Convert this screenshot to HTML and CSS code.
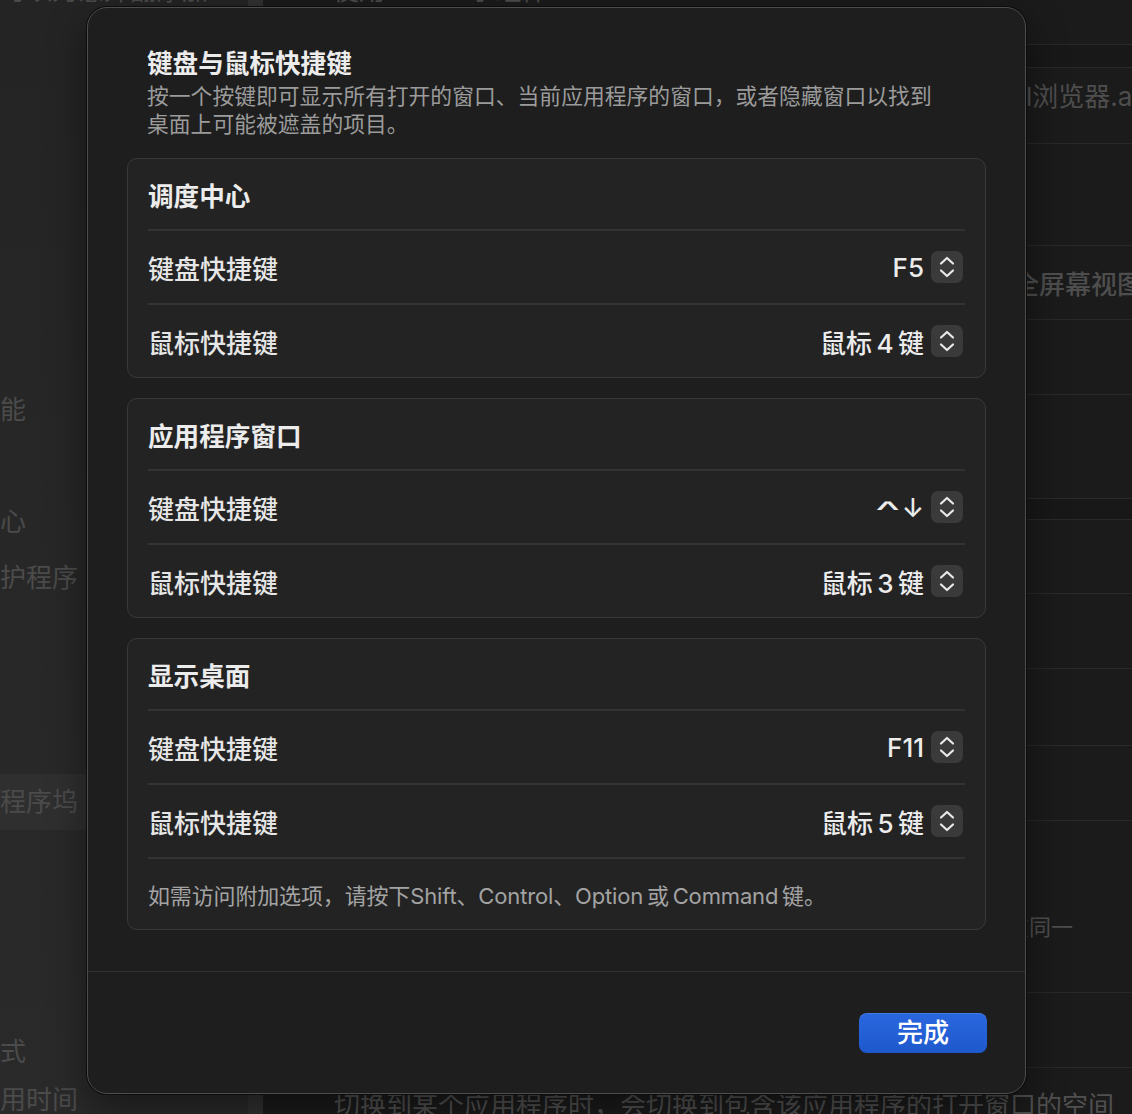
FILE: index.html
```html
<!DOCTYPE html>
<html lang="zh-CN">
<head>
<meta charset="utf-8">
<title>键盘与鼠标快捷键</title>
<link rel="stylesheet" href="styles.css">
</head>
<body>
<div class="screen">
  <aside class="sidebar">
    <div class="clip-strip"><span>可以为意外翻添加</span></div>
    <div class="sb-space-top"></div>
    <div class="sb-item">能</div>
    <div class="sb-item"></div>
    <div class="sb-item">心</div>
    <div class="sb-item">护程序</div>
    <div class="sb-item"></div>
    <div class="sb-item"></div>
    <div class="sb-item"></div>
    <div class="sb-item selected">程序坞</div>
    <div class="sb-space-bottom"></div>
    <div class="sb-item small">式</div>
    <div class="sb-item small">用时间</div>
  </aside>

  <main class="content">
    <div class="c-row r-top"><div class="clip-strip"><span>使用iPhone小组件</span></div></div>
    <div class="c-row c-gap r-gap1"></div>
    <div class="c-row r-browser"><span class="far-browser">l浏览器.app</span></div>
    <div class="c-row r-102"></div>
    <div class="c-row r-74"><span class="far-full">全屏幕视图</span></div>
    <div class="c-row r-75"></div>
    <div class="c-row r-104"></div>
    <div class="c-row c-gap r-gap2"></div>
    <div class="c-row r-74"></div>
    <div class="c-row r-75"></div>
    <div class="c-row r-77"></div>
    <div class="c-row r-75"></div>
    <div class="c-row r-172"><span class="far-same">在同一</span></div>
    <div class="c-row r-75"></div>
    <div class="c-row r-last"><span class="bottom-text">切换到某个应用程序时，会切换到包含该应用程序的打开窗口的空间</span></div>
  </main>

  <div class="dialog">
    <div class="dialog-body">
      <h1 class="title">键盘与鼠标快捷键</h1>
      <p class="subtitle">按一个按键即可显示所有打开的窗口、当前应用程序的窗口，或者隐藏窗口以找到桌面上可能被遮盖的项目。</p>

      <section class="group">
        <div class="group-head">调度中心</div>
        <div class="row">
          <span class="label">键盘快捷键</span>
          <span class="value">F5</span>
          <span class="stepper"><svg width="32" height="32" viewBox="0 0 32 32"><polyline points="10,12.5 16,7 22,12.5"/><polyline points="10,19.5 16,25 22,19.5"/></svg></span>
        </div>
        <div class="row">
          <span class="label">鼠标快捷键</span>
          <span class="value">鼠标&thinsp;4&thinsp;键</span>
          <span class="stepper"><svg width="32" height="32" viewBox="0 0 32 32"><polyline points="10,12.5 16,7 22,12.5"/><polyline points="10,19.5 16,25 22,19.5"/></svg></span>
        </div>
      </section>

      <section class="group">
        <div class="group-head">应用程序窗口</div>
        <div class="row">
          <span class="label">键盘快捷键</span>
          <span class="value"><span class="ctrl">∧</span><span class="arrow">↓</span></span>
          <span class="stepper"><svg width="32" height="32" viewBox="0 0 32 32"><polyline points="10,12.5 16,7 22,12.5"/><polyline points="10,19.5 16,25 22,19.5"/></svg></span>
        </div>
        <div class="row">
          <span class="label">鼠标快捷键</span>
          <span class="value">鼠标&thinsp;3&thinsp;键</span>
          <span class="stepper"><svg width="32" height="32" viewBox="0 0 32 32"><polyline points="10,12.5 16,7 22,12.5"/><polyline points="10,19.5 16,25 22,19.5"/></svg></span>
        </div>
      </section>

      <section class="group">
        <div class="group-head">显示桌面</div>
        <div class="row">
          <span class="label">键盘快捷键</span>
          <span class="value">F11</span>
          <span class="stepper"><svg width="32" height="32" viewBox="0 0 32 32"><polyline points="10,12.5 16,7 22,12.5"/><polyline points="10,19.5 16,25 22,19.5"/></svg></span>
        </div>
        <div class="row">
          <span class="label">鼠标快捷键</span>
          <span class="value">鼠标&thinsp;5&thinsp;键</span>
          <span class="stepper"><svg width="32" height="32" viewBox="0 0 32 32"><polyline points="10,12.5 16,7 22,12.5"/><polyline points="10,19.5 16,25 22,19.5"/></svg></span>
        </div>
        <div class="note">如需访问附加选项，请按下Shift、Control、Option&thinsp;或&thinsp;Command&thinsp;键。</div>
      </section>
    </div>
    <div class="dialog-foot">
      <button class="btn-primary" type="button">完成</button>
    </div>
  </div>
</div>
</body>
</html>
```

FILE: styles.css
```css
* { box-sizing: border-box; margin: 0; padding: 0; }

html, body {
  width: 1132px;
  height: 1114px;
  overflow: hidden;
  background: #1b1b1b;
}

body {
  font-family: Inter, "Noto Sans CJK SC", "Noto Sans", "DejaVu Sans", sans-serif;
  -webkit-font-smoothing: antialiased;
}

.screen {
  position: relative;
  width: 1132px;
  height: 1114px;
  display: flex;
  overflow: hidden;
}

/* ---------- dimmed background window ---------- */
.sidebar {
  width: 263px;
  flex: none;
  background: linear-gradient(180deg, #242424 0%, #282828 60%, #2a2a2a 100%);
  border-right: 15px solid #313131;
  display: flex;
  flex-direction: column;
  color: #4b4b4b;
  font-size: 26px;
  white-space: nowrap;
}

.clip-strip {
  height: 6px;
  overflow: hidden;
  display: flex;
  align-items: flex-end;
  flex: none;
}

.clip-strip span {
  display: block;
  line-height: 30px;
  height: 30px;
  font-size: 26px;
  color: #4b4b4b;
}

.sb-space-top { height: 376px; flex: none; }
.sb-space-bottom { height: 198px; flex: none; }

.sb-item {
  height: 56px;
  line-height: 56px;
  flex: none;
}

.sb-item.selected { background: #2f2f2f; }
.sb-item.small { height: 48px; line-height: 48px; }

.content {
  flex: 1;
  min-width: 0;
  display: flex;
  flex-direction: column;
  background: #1b1b1b;
  color: #4e4e4e;
  font-size: 26px;
  white-space: nowrap;
}

.c-row {
  flex: none;
  border-bottom: 1px solid #292929;
  display: flex;
  align-items: center;
  overflow: hidden;
}

.c-gap { background: #181818; }

.r-top { height: 45px; align-items: flex-start; padding-left: 70px; }
.r-gap1 { height: 23px; }
.r-browser { height: 76px; align-items: flex-start; padding-top: 13px; }
.r-102 { height: 102px; }
.r-74 { height: 74px; }
.r-75 { height: 75px; }
.r-77 { height: 77px; }
.r-104 { height: 104px; }
.r-gap2 { height: 21px; }
.r-172 { height: 172px; align-items: flex-start; padding-top: 92px; }
.r-last { flex: 1; align-items: flex-start; padding: 22px 0 0 71px; border-bottom: none; }

.far-browser { margin-left: 763px; line-height: 32px; }
.far-full { margin-left: 750px; font-weight: 500; }
.far-same { margin-left: 744px; font-size: 22px; line-height: 28px; }
.bottom-text { line-height: 32px; color: #505050; }

/* ---------- dialog ---------- */
.dialog {
  position: absolute;
  left: 87px;
  top: 7px;
  width: 939px;
  height: 1087px;
  background: #1e1e1e;
  border: 1px solid #4e4e4e;
  border-radius: 20px;
  box-shadow: 0 0 0 1px #0c0c0c, 0 14px 40px rgba(0, 0, 0, 0.45);
  display: flex;
  flex-direction: column;
  color: #e3e3e3;
  overflow: hidden;
}

.dialog-body {
  padding: 40px 39px 41px;
}

.title {
  font-size: 25.6px;
  line-height: 32px;
  font-weight: 700;
  color: #ececec;
  padding-left: 20px;
}

.subtitle {
  margin-top: 2px;
  padding-left: 20px;
  max-width: 820px;
  font-size: 21.8px;
  line-height: 28px;
  color: #9b9b9b;
}

.group {
  margin-top: 20px;
  background: #232323;
  border: 1px solid #393939;
  border-radius: 10px;
}

.group-head {
  height: 70px;
  padding: 0 20px;
  display: flex;
  align-items: center;
  font-size: 25.6px;
  font-weight: 700;
  color: #ececec;
}

.row {
  margin: 0 20px;
  height: 74px;
  border-top: 2px solid #333333;
  display: flex;
  align-items: center;
  font-size: 26px;
  font-weight: 500;
  color: #e6e6e6;
}

.label { flex: 1; }

.value {
  white-space: nowrap;
  color: #ececec;
  display: flex;
  align-items: center;
}

.ctrl {
  display: inline-block;
  font-family: "DejaVu Sans", sans-serif;
  font-weight: 400;
  font-size: 24px;
  line-height: 26px;
  height: 26px;
  transform: translateY(3px) scale(1.9, 0.62);
  transform-origin: center top;
  margin-right: 5px;
}

.arrow {
  font-family: Inter, "DejaVu Sans", sans-serif;
  font-size: 26px;
}

.stepper {
  width: 32px;
  height: 32px;
  margin-left: 7px;
  margin-right: 2px;
  border-radius: 7px;
  background: #3a3a3a;
  display: flex;
  align-items: center;
  justify-content: center;
  flex: none;
}

.stepper svg polyline {
  fill: none;
  stroke: #e9e9e9;
  stroke-width: 2.2;
  stroke-linecap: round;
  stroke-linejoin: round;
}

.note {
  margin: 0 20px;
  height: 72px;
  border-top: 2px solid #333333;
  display: flex;
  align-items: center;
  font-size: 22px;
  letter-spacing: -0.15px;
  color: #a3a3a3;
  white-space: nowrap;
}

.dialog-foot {
  border-top: 1px solid #323232;
  padding: 41px 38px 0;
  display: flex;
  justify-content: flex-end;
}

.btn-primary {
  width: 128px;
  height: 40px;
  border: none;
  border-radius: 8px;
  background: linear-gradient(180deg, #2a67de 0%, #1e58cd 100%);
  box-shadow: inset 0 1px 0 rgba(255, 255, 255, 0.12);
  color: #ffffff;
  font-family: inherit;
  font-size: 26px;
  font-weight: 500;
  line-height: 40px;
}
```
